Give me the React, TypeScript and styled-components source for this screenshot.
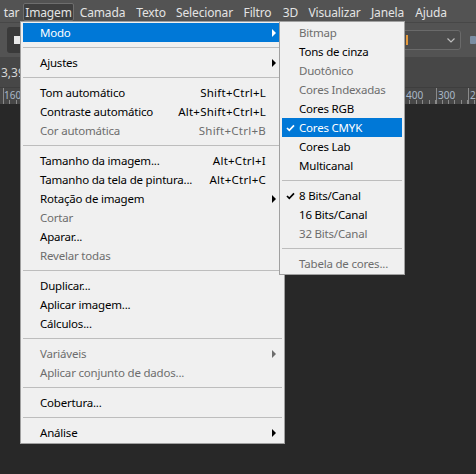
import React from "react";
import styled, { createGlobalStyle } from "styled-components";

const Global = createGlobalStyle`
  html, body { margin: 0; padding: 0; background: #282828; }
  body {
    width: 476px; height: 474px; overflow: hidden;
    font-family: "Noto Sans", "Open Sans", "DejaVu Sans", sans-serif;
  }
`;

const Page = styled.div`
  position: relative;
  width: 476px;
  height: 474px;
  background: #282828;
  overflow: hidden;
  display: flex;
  flex-direction: column;
`;

const MenuBar = styled.div`
  height: 22px;
  background: #535353;
  display: flex;
  align-items: center;
  flex-shrink: 0;
`;

const BarItem = styled.div<{ $active?: boolean; $w: number }>`
  box-sizing: border-box;
  width: ${(p) => p.$w}px;
  height: 18px;
  margin-top: 2px;
  display: flex;
  align-items: center;
  justify-content: center;
  font-size: 12px;
  letter-spacing: -0.15px;
  color: #e4e4e4;
  white-space: nowrap;
  border: 1px solid ${(p) => (p.$active ? "#6e6e6e" : "transparent")};
  background: ${(p) => (p.$active ? "#3f3f3f" : "transparent")};
  border-radius: 2px;
`;

const OptionsBar = styled.div`
  height: 34px;
  background: #535353;
  border-top: 1px solid #474747;
  display: flex;
  align-items: center;
  padding: 0 0 0 7px;
  flex-shrink: 0;
`;

const ToolButton = styled.div`
  box-sizing: border-box;
  width: 30px;
  height: 26px;
  background: #3a3a3a;
  border-radius: 3px;
  display: flex;
  align-items: center;
  padding-left: 7px;
`;

const WhiteSquare = styled.div`
  width: 7px;
  height: 8px;
  background: #e8e8e8;
`;

const Spacer = styled.div`
  flex: 1;
`;

const Dropdown = styled.div`
  box-sizing: border-box;
  width: 70px;
  height: 20px;
  border: 1px solid #6a6a6a;
  border-radius: 3px;
  background: #4c4c4c;
  display: flex;
  align-items: center;
  justify-content: space-between;
  padding: 0 5px 0 14px;
  margin-right: 9px;
`;

const OrangeMark = styled.div`
  width: 2px;
  height: 10px;
  background: #e59a3c;
`;

const SmallSwatch = styled.div`
  width: 6px;
  height: 8px;
  background: #7b8da3;
  border-radius: 1px;
`;

const InfoBar = styled.div`
  height: 30px;
  background: #474747;
  display: flex;
  align-items: center;
  flex-shrink: 0;
  font-size: 12px;
  color: #d6d6d6;
  padding-left: 1px;
`;

const InfoText = styled.span`
  white-space: nowrap;
`;

const RulerWrap = styled.div`
  height: 16px;
  background: #474747;
  border-top: 1px solid #3e3e3e;
  flex-shrink: 0;
`;

const Canvas = styled.div`
  flex: 1;
  background: #282828;
`;

const Menu = styled.div<{ $left: number; $top: number; $width: number }>`
  position: absolute;
  left: ${(p) => p.$left}px;
  top: ${(p) => p.$top}px;
  width: ${(p) => p.$width}px;
  box-sizing: border-box;
  background: #f0f0f0;
  border: 1px solid #a0a0a0;
  padding: 1px 2px;
  display: flex;
  flex-direction: column;
  font-size: 11.5px;
  letter-spacing: -0.2px;
`;

const Row = styled.div<{ $active?: boolean; $disabled?: boolean }>`
  height: 19px;
  display: flex;
  align-items: center;
  padding-left: 17px;
  position: relative;
  background: ${(p) => (p.$active ? "#0078d7" : "transparent")};
  color: ${(p) => (p.$active ? "#ffffff" : p.$disabled ? "#6d6d6d" : "#000000")};
  white-space: nowrap;
`;

const Label = styled.span`
  flex: 1;
`;

const Shortcut = styled.span`
  text-align: right;
  letter-spacing: 0.25px;
`;

const ArrowCell = styled.span`
  width: 16px;
  height: 19px;
  display: flex;
  align-items: center;
  padding-left: 6px;
  box-sizing: border-box;
  flex-shrink: 0;
`;

const Arrow = styled.span<{ $color: string }>`
  width: 0;
  height: 0;
  border-left: 4px solid ${(p) => p.$color};
  border-top: 4px solid transparent;
  border-bottom: 4px solid transparent;
`;

const CheckBox = styled.span`
  position: absolute;
  left: 4px;
  top: 6px;
  width: 9px;
  height: 8px;
  display: flex;
`;

const Sep = styled.div`
  height: 11px;
  display: flex;
  align-items: center;
`;

const SepLine = styled.div`
  flex: 1;
  height: 1px;
  background: #bdbdbd;
`;

type Entry =
  | {
      kind: "item";
      label: string;
      shortcut?: string;
      disabled?: boolean;
      sub?: boolean;
      active?: boolean;
      checked?: boolean;
    }
  | { kind: "sep" };

const it = (label: string, o: Partial<Extract<Entry, { kind: "item" }>> = {}): Entry => ({
  kind: "item",
  label,
  ...o,
});
const sep: Entry = { kind: "sep" };

const mainMenu: Entry[] = [
  it("Modo", { sub: true, active: true }),
  sep,
  it("Ajustes", { sub: true }),
  sep,
  it("Tom automático", { shortcut: "Shift+Ctrl+L" }),
  it("Contraste automático", { shortcut: "Alt+Shift+Ctrl+L" }),
  it("Cor automática", { shortcut: "Shift+Ctrl+B", disabled: true }),
  sep,
  it("Tamanho da imagem...", { shortcut: "Alt+Ctrl+I" }),
  it("Tamanho da tela de pintura...", { shortcut: "Alt+Ctrl+C" }),
  it("Rotação de imagem", { sub: true }),
  it("Cortar", { disabled: true }),
  it("Aparar..."),
  it("Revelar todas", { disabled: true }),
  sep,
  it("Duplicar..."),
  it("Aplicar imagem..."),
  it("Cálculos..."),
  sep,
  it("Variáveis", { sub: true, disabled: true }),
  it("Aplicar conjunto de dados...", { disabled: true }),
  sep,
  it("Cobertura..."),
  sep,
  it("Análise", { sub: true }),
];

const modeMenu: Entry[] = [
  it("Bitmap", { disabled: true }),
  it("Tons de cinza"),
  it("Duotônico", { disabled: true }),
  it("Cores Indexadas", { disabled: true }),
  it("Cores RGB"),
  it("Cores CMYK", { checked: true, active: true }),
  it("Cores Lab"),
  it("Multicanal"),
  sep,
  it("8 Bits/Canal", { checked: true }),
  it("16 Bits/Canal"),
  it("32 Bits/Canal", { disabled: true }),
  sep,
  it("Tabela de cores...", { disabled: true }),
];

const Check = ({ color }: { color: string }) => (
  <svg width="9" height="8" viewBox="0 0 9 8">
    <path d="M1 4 L3.3 6.3 L8 1.3" fill="none" stroke={color} strokeWidth="1.7" />
  </svg>
);

const MenuList = ({
  entries,
  left,
  top,
  width,
  arrows,
}: {
  entries: Entry[];
  left: number;
  top: number;
  width: number;
  arrows: boolean;
}) => (
  <Menu $left={left} $top={top} $width={width}>
    {entries.map((e, i) =>
      e.kind === "sep" ? (
        <Sep key={i}>
          <SepLine />
        </Sep>
      ) : (
        <Row key={i} $active={e.active} $disabled={e.disabled}>
          {e.checked && (
            <CheckBox>
              <Check color={e.active ? "#ffffff" : "#000000"} />
            </CheckBox>
          )}
          <Label>{e.label}</Label>
          {e.shortcut && <Shortcut>{e.shortcut}</Shortcut>}
          {arrows && (
            <ArrowCell>
              {e.sub && (
                <Arrow $color={e.active ? "#ffffff" : e.disabled ? "#6d6d6d" : "#000000"} />
              )}
            </ArrowCell>
          )}
        </Row>
      )
    )}
  </Menu>
);

const barItems: { label: string; w: number; active?: boolean }[] = [
  { label: "tar", w: 23 },
  { label: "Imagem", w: 51, active: true },
  { label: "Camada", w: 57 },
  { label: "Texto", w: 40 },
  { label: "Selecionar", w: 67 },
  { label: "Filtro", w: 39 },
  { label: "3D", w: 27 },
  { label: "Visualizar", w: 61 },
  { label: "Janela", w: 45 },
  { label: "Ajuda", w: 42 },
];

const Ruler = () => {
  const ticks: React.ReactNode[] = [];
  for (let x = 3; x < 476; x += 6.45) {
    ticks.push(
      <line key={x} x1={Math.round(x) + 0.5} x2={Math.round(x) + 0.5} y1={12} y2={16} stroke="#8a8a8a" strokeWidth="1" />
    );
  }
  const majors = [3, 404, 436, 468];
  const labels: [number, string][] = [
    [4, "160"],
    [406, "400"],
    [438, "300"],
    [470, "2"],
  ];
  return (
    <svg width="476" height="16" viewBox="0 0 476 16" style={{ display: "block" }}>
      {ticks}
      {majors.map((x) => (
        <line key={"m" + x} x1={x + 0.5} x2={x + 0.5} y1={0} y2={16} stroke="#8a8a8a" strokeWidth="1" />
      ))}
      {labels.map(([x, t]) => (
        <text key={t} x={x} y={11} fontSize="10" fill="#a9b8c8" fontFamily="Noto Sans, sans-serif">
          {t}
        </text>
      ))}
    </svg>
  );
};

export default function App() {
  return (
    <Page>
      <Global />
      <MenuBar>
        {barItems.map((b) => (
          <BarItem key={b.label} $w={b.w} $active={b.active}>
            {b.label}
          </BarItem>
        ))}
      </MenuBar>
      <OptionsBar>
        <ToolButton>
          <WhiteSquare />
        </ToolButton>
        <Spacer />
        <Dropdown>
          <OrangeMark />
          <svg width="8" height="5" viewBox="0 0 8 5">
            <path d="M0.5 0.5 L4 4 L7.5 0.5" fill="none" stroke="#bdbdbd" strokeWidth="1.2" />
          </svg>
        </Dropdown>
        <SmallSwatch />
      </OptionsBar>
      <InfoBar>
        <InfoText>3,39</InfoText>
      </InfoBar>
      <RulerWrap>
        <Ruler />
      </RulerWrap>
      <Canvas />
      <MenuList entries={mainMenu} left={20} top={21} width={265} arrows />
      <MenuList entries={modeMenu} left={279} top={21} width={126} arrows={false} />
    </Page>
  );
}
